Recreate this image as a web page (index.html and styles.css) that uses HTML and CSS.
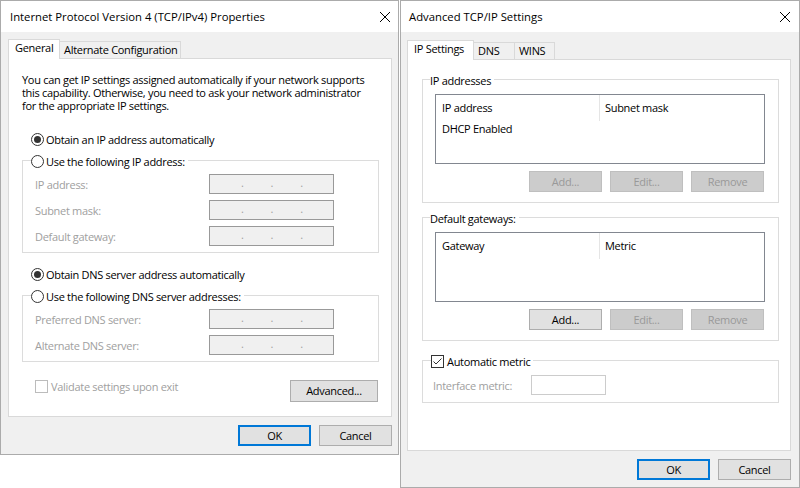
FILE: index.html
```html
<!DOCTYPE html>
<html lang="en">
  <head>
    <meta charset="UTF-8" />
    <meta name="viewport" content="width=device-width, initial-scale=1.0" />
    <title>TCP/IP Properties</title>
    <link rel="stylesheet" href="styles.css">
  </head>
  <body>
    <div class="dialog dialog-ipv4">
      <div class="titlebar">
        <span class="title">Internet Protocol Version 4 (TCP/IPv4) Properties</span>
        <svg class="close" width="10" height="10" viewBox="0 0 10 10"><path d="M0 0L10 10M10 0L0 10" stroke="#000" stroke-width="1" fill="none"/></svg>
      </div>
      <div class="dialog-body">
        <div class="tabs">
          <div class="tab tab-active tab-general">General</div>
          <div class="tab tab-alternate">Alternate Configuration</div>
        </div>
        <div class="panel panel-general">
          <p class="intro">You can get IP settings assigned automatically if your network supports<br>this capability. Otherwise, you need to ask your network administrator<br>for the appropriate IP settings.</p>

          <div class="option option-ip"><span class="radio radio-checked"></span>Obtain an IP address automatically</div>
          <div class="group">
            <div class="group-head"><span class="radio"></span>Use the following IP address:</div>
            <div class="field-grid">
              <span class="label-off">IP address:</span>
              <span class="ip-field"><span>.</span><span>.</span><span>.</span></span>
              <span class="label-off">Subnet mask:</span>
              <span class="ip-field"><span>.</span><span>.</span><span>.</span></span>
              <span class="label-off">Default gateway:</span>
              <span class="ip-field"><span>.</span><span>.</span><span>.</span></span>
            </div>
          </div>

          <div class="option option-dns"><span class="radio radio-checked"></span>Obtain DNS server address automatically</div>
          <div class="group">
            <div class="group-head"><span class="radio"></span>Use the following DNS server addresses:</div>
            <div class="field-grid">
              <span class="label-off">Preferred DNS server:</span>
              <span class="ip-field"><span>.</span><span>.</span><span>.</span></span>
              <span class="label-off">Alternate DNS server:</span>
              <span class="ip-field"><span>.</span><span>.</span><span>.</span></span>
            </div>
          </div>

          <div class="validate-row">
            <div class="check check-off"><span class="checkbox"></span>Validate settings upon exit</div>
            <div class="button button-advanced">Advanced...</div>
          </div>
        </div>
        <div class="footer">
          <div class="button button-default">OK</div>
          <div class="button">Cancel</div>
        </div>
      </div>
    </div>

    <div class="dialog dialog-advanced">
      <div class="titlebar">
        <span class="title">Advanced TCP/IP Settings</span>
        <svg class="close" width="10" height="10" viewBox="0 0 10 10"><path d="M0 0L10 10M10 0L0 10" stroke="#000" stroke-width="1" fill="none"/></svg>
      </div>
      <div class="dialog-body">
        <div class="tabs">
          <div class="tab tab-active tab-ipset">IP Settings</div>
          <div class="tab tab-dns">DNS</div>
          <div class="tab tab-wins">WINS</div>
        </div>
        <div class="panel panel-ipset">
          <div class="group group-list">
            <div class="group-title">IP addresses</div>
            <div class="listview">
              <div class="lv-head"><span>IP address</span><span>Subnet mask</span></div>
              <div class="lv-row">DHCP Enabled</div>
            </div>
            <div class="button-row">
              <div class="button button-off">Add...</div>
              <div class="button button-off">Edit...</div>
              <div class="button button-off">Remove</div>
            </div>
          </div>

          <div class="group group-list">
            <div class="group-title">Default gateways:</div>
            <div class="listview">
              <div class="lv-head"><span>Gateway</span><span>Metric</span></div>
            </div>
            <div class="button-row">
              <div class="button">Add...</div>
              <div class="button button-off">Edit...</div>
              <div class="button button-off">Remove</div>
            </div>
          </div>

          <div class="group group-metric">
            <div class="group-head group-head-check"><span class="checkbox checkbox-on"><svg width="11" height="11" viewBox="0 0 11 11"><path d="M1.5 5.5L4 8L9.5 2.5" stroke="#333" stroke-width="1" fill="none"/></svg></span>Automatic metric</div>
            <div class="metric-row">
              <span class="label-off">Interface metric:</span>
              <span class="text-field"></span>
            </div>
          </div>
        </div>
        <div class="footer">
          <div class="button button-default">OK</div>
          <div class="button">Cancel</div>
        </div>
      </div>
    </div>
  </body>
</html>
```

FILE: styles.css
```css
* {
  box-sizing: border-box;
}
body {
  margin: 0;
  width: 800px;
  height: 488px;
  overflow: hidden;
  display: flex;
  align-items: flex-start;
  background-color: #fff;
  color: #000;
  font-family: "Open Sans", "Noto Sans", sans-serif;
  font-size: 11px;
  letter-spacing: -0.3px;
}

.dialog {
  display: flex;
  flex-direction: column;
  border: 1px solid #ababab;
  background-color: #f0f0f0;
}
.dialog-ipv4 {
  width: 399px;
  height: 455px;
}
.dialog-advanced {
  width: 400px;
  height: 488px;
  margin-left: 1px;
}

.titlebar {
  height: 31px;
  display: flex;
  align-items: center;
  justify-content: space-between;
  background-color: #fff;
  line-height: 15px;
}
.title {
  font-size: 11.3px;
  letter-spacing: 0;
}
.dialog-ipv4 .titlebar {
  padding: 0 8px 0 9px;
}
.dialog-advanced .titlebar {
  padding: 0 9px 0 8px;
}
.close {
  display: block;
}

.dialog-ipv4 .dialog-body {
  padding: 7px 6px 0 7px;
}
.dialog-advanced .dialog-body {
  padding: 8px 8px 0 6px;
}

/* tabs */
.tabs {
  display: flex;
  align-items: flex-end;
  height: 19px;
}
.tab {
  height: 17px;
  margin-left: -1px;
  padding-left: 4px;
  border: 1px solid #d9d9d9;
  border-bottom: 0;
  background-color: #f0f0f0;
  line-height: 15px;
  white-space: nowrap;
}
.tab-active {
  position: relative;
  z-index: 1;
  height: 20px;
  margin-left: 0;
  margin-bottom: -1px;
  padding-left: 6px;
  background-color: #fff;
}
.tab-general { width: 52px; }
.tab-alternate { width: 122px; }
.tab-ipset { width: 67px; }
.tab-dns { width: 42px; }
.tab-wins { width: 41px; }

.panel {
  border: 1px solid #d9d9d9;
  background-color: #fff;
}
.panel-general {
  height: 359px;
  padding: 14px 12px 0 13px;
}
.panel-ipset {
  height: 392px;
  padding: 19px 11px 0 14px;
}

.intro {
  margin: 0;
  line-height: 13px;
  white-space: nowrap;
}

/* radios, checkboxes */
.option {
  display: flex;
  align-items: center;
  height: 13px;
  line-height: 13px;
}
.option-ip {
  margin-top: 21px;
}
.option-dns {
  margin-top: 15px;
}
.option .radio {
  margin-left: 9px;
}
.radio {
  flex: none;
  display: flex;
  align-items: center;
  justify-content: center;
  width: 13px;
  height: 13px;
  margin-right: 2px;
  border: 1px solid #333;
  border-radius: 50%;
  background-color: #fff;
}
.radio-checked:after {
  content: "";
  width: 7px;
  height: 7px;
  border-radius: 50%;
  background-color: #333;
}
.checkbox {
  flex: none;
  display: flex;
  align-items: center;
  justify-content: center;
  width: 13px;
  height: 13px;
  margin-right: 3px;
  border: 1px solid #333;
  background-color: #fff;
}
.checkbox svg {
  display: block;
}
.check-off {
  color: #a0a0a0;
}
.check-off .checkbox {
  border-color: #bcbcbc;
}

/* group boxes */
.group {
  margin-top: 14px;
  padding: 0 0 6px 12px;
  border: 1px solid #dcdcdc;
}
.group-head,
.group-title {
  display: flex;
  align-items: center;
  width: max-content;
  height: 13px;
  margin: -6px 0 0 -4px;
  padding-right: 3px;
  background-color: #fff;
  line-height: 13px;
}
.group-title {
  margin-left: -5px;
}

.field-grid {
  display: grid;
  grid-template-columns: 174px 125px;
  grid-auto-rows: 20px;
  row-gap: 6px;
  align-items: center;
  margin-top: 6px;
}
.label-off {
  color: #a0a0a0;
}
.ip-field {
  display: flex;
  gap: 27px;
  height: 20px;
  padding-left: 31px;
  border: 1px solid #999;
  background-color: #f0f0f0;
  color: #a0a0a0;
  line-height: 16px;
}

.validate-row {
  display: flex;
  justify-content: space-between;
  align-items: flex-start;
  margin-top: 18px;
}
.check {
  display: flex;
  align-items: center;
  height: 13px;
  margin-left: 13px;
  line-height: 13px;
}

/* buttons */
.button {
  width: 73px;
  height: 21px;
  border: 1px solid #adadad;
  background-color: #e1e1e1;
  text-align: center;
  line-height: 19px;
}
.button-advanced {
  width: 88px;
  height: 22px;
  margin-right: 1px;
  line-height: 20px;
}
.button-default {
  border: 2px solid #0078d7;
  line-height: 17px;
}
.button-off {
  border-color: #bfbfbf;
  background-color: #ccc;
  color: #999;
}
.footer {
  display: flex;
  justify-content: flex-end;
  gap: 8px;
  margin-top: 8px;
}

/* advanced dialog */
.group-list {
  margin-top: 0;
  padding: 0 13px 10px 12px;
}
.group-list + .group-list {
  margin-top: 14px;
}
.listview {
  height: 70px;
  margin-top: 7px;
  border: 1px solid #828790;
  background-color: #fff;
}
.lv-head {
  display: grid;
  grid-template-columns: 164px 1fr;
  height: 26px;
}
.lv-head span {
  padding-left: 5px;
  line-height: 26px;
}
.lv-head span:first-child {
  padding-left: 6px;
  border-right: 1px solid #e5e5e5;
}
.lv-row {
  padding-left: 6px;
  line-height: 16px;
}
.button-row {
  display: flex;
  justify-content: flex-end;
  gap: 8px;
  margin-top: 7px;
  padding-right: 1px;
}

.group-metric {
  margin-top: 19px;
  padding: 0 0 7px 10px;
}
.group-head-check {
  margin-left: -2px;
}
.metric-row {
  display: grid;
  grid-template-columns: 98px 75px;
  align-items: center;
  margin-top: 7px;
}
.text-field {
  height: 20px;
  border: 1px solid #ccc;
  background-color: #fff;
}
```
